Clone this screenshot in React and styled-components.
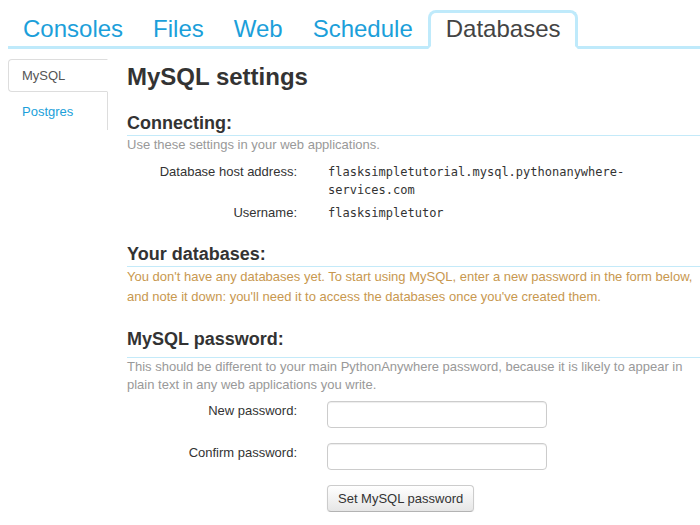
import React from "react";
import styled, { createGlobalStyle } from "styled-components";

const GlobalStyle = createGlobalStyle`
  html {
    overflow: hidden;
  }
  body {
    margin: 8px 0 8px 8px;
    background: #fff;
    font-family: "Liberation Sans", Arial, sans-serif;
    font-size: 13px;
    color: #333;
  }
`;

const Page = styled.div`
  width: 692px;
`;

const TabBar = styled.ul`
  display: flex;
  list-style: none;
  margin: 0;
  padding: 2px 0 0;
  border-bottom: 3px solid #bfeafb;
`;

const Tab = styled.li`
  margin-bottom: -3px;
  padding: ${(p) => (p.$active ? "3px 15px 4px" : "6px 15px 7px")};
  font-size: 24px;
  line-height: 26px;
  border: ${(p) => (p.$active ? "3px solid #bfeafb" : "0")};
  border-bottom-color: #fff;
  border-radius: 8px 8px 0 0;
  color: ${(p) => (p.$active ? "#444" : "#1c9fda")};
  background: ${(p) => (p.$active ? "#fff" : "transparent")};
`;

const Body = styled.div`
  display: flex;
  align-items: flex-start;
  gap: 19px;
  margin-top: 10px;
`;

const SideNav = styled.ul`
  width: 99px;
  flex: none;
  list-style: none;
  margin: 0;
  padding: 0 0 2px;
  border-right: 1px solid #ddd;
  display: flex;
  flex-direction: column;
  gap: 3px;
`;

const SideItem = styled.li`
  height: 31px;
  margin-right: -1px;
  padding-left: 13px;
  display: flex;
  align-items: center;
  font-size: 13px;
  border: 1px solid ${(p) => (p.$active ? "#ddd" : "transparent")};
  border-right-color: ${(p) => (p.$active ? "#fff" : "transparent")};
  border-radius: 4px 0 0 4px;
  background: ${(p) => (p.$active ? "#fff" : "transparent")};
  color: ${(p) => (p.$active ? "#555" : "#1c9fda")};
`;

const Main = styled.div`
  flex: 1;
  min-width: 0;
`;

const Title = styled.h1`
  margin: 3px 0 0;
  font-size: 24px;
  line-height: 30px;
  font-weight: bold;
  color: #333;
`;

const SectionTitle = styled.h3`
  margin: ${(p) => p.$top}px 0 0;
  padding-bottom: ${(p) => p.$pad || 1}px;
  font-size: 18px;
  line-height: 22px;
  font-weight: bold;
  color: #333;
  border-bottom: 1px solid #c4eaf9;
`;

const Note = styled.p`
  margin: 0;
  font-size: 13px;
  line-height: ${(p) => (p.$warn ? 20 : 18)}px;
  color: ${(p) => (p.$warn ? "#c8984f" : "#999")};
`;

const Details = styled.dl`
  display: grid;
  grid-template-columns: 170px 1fr;
  column-gap: 31px;
  row-gap: 5px;
  margin: 9px 0 0;
  line-height: 18px;
`;

const Term = styled.dt`
  text-align: right;
  font-size: 13px;
  color: #333;
`;

const Value = styled.dd`
  margin: 0;
  font-family: "DejaVu Sans Mono", "Liberation Mono", monospace;
  font-size: 12px;
  color: #333;
`;

const Form = styled.form`
  display: grid;
  grid-template-columns: 170px 1fr;
  column-gap: 30px;
  row-gap: 15px;
  margin-top: 7px;
`;

const Label = styled.label`
  text-align: right;
  padding-top: 1px;
  font-size: 13px;
  line-height: 18px;
  color: #333;
`;

const Input = styled.input`
  box-sizing: border-box;
  width: 220px;
  height: 27px;
  margin: 0;
  border: 1px solid #ccc;
  border-radius: 4px;
  box-shadow: inset 0 1px 1px rgba(0, 0, 0, 0.075);
  background: #fff;
`;

const Button = styled.button`
  grid-column: 2;
  justify-self: start;
  box-sizing: border-box;
  height: 27px;
  padding: 0 10px;
  font-family: "Liberation Sans", Arial, sans-serif;
  font-size: 13px;
  color: #333;
  border: 1px solid #ccc;
  border-bottom-color: #b3b3b3;
  border-radius: 4px;
  background: linear-gradient(#fff, #e6e6e6);
  box-shadow: inset 0 1px 0 rgba(255, 255, 255, 0.2), 0 1px 2px rgba(0, 0, 0, 0.05);
`;

const tabs = ["Consoles", "Files", "Web", "Schedule", "Databases"];

export default function App() {
  return (
    <Page>
      <GlobalStyle />
      <TabBar>
        {tabs.map((t) => (
          <Tab key={t} $active={t === "Databases"}>
            {t}
          </Tab>
        ))}
      </TabBar>
      <Body>
        <SideNav>
          <SideItem $active>MySQL</SideItem>
          <SideItem>Postgres</SideItem>
        </SideNav>
        <Main>
          <Title>MySQL settings</Title>

          <SectionTitle $top={20}>Connecting:</SectionTitle>
          <Note>Use these settings in your web applications.</Note>
          <Details>
            <Term>Database host address:</Term>
            <Value>flasksimpletutorial.mysql.pythonanywhere-services.com</Value>
            <Term>Username:</Term>
            <Value>flasksimpletutor</Value>
          </Details>

          <SectionTitle $top={21}>Your databases:</SectionTitle>
          <Note $warn>
            You don't have any databases yet. To start using MySQL, enter a new
            password in the form below, and note it down: you'll need it to
            access the databases once you've created them.
          </Note>

          <SectionTitle $top={21} $pad={7}>
            MySQL password:
          </SectionTitle>
          <Note>
            This should be different to your main PythonAnywhere password,
            because it is likely to appear in plain text in any web
            applications you write.
          </Note>
          <Form onSubmit={(e) => e.preventDefault()}>
            <Label>New password:</Label>
            <Input type="password" />
            <Label>Confirm password:</Label>
            <Input type="password" />
            <Button type="submit">Set MySQL password</Button>
          </Form>
        </Main>
      </Body>
    </Page>
  );
}
